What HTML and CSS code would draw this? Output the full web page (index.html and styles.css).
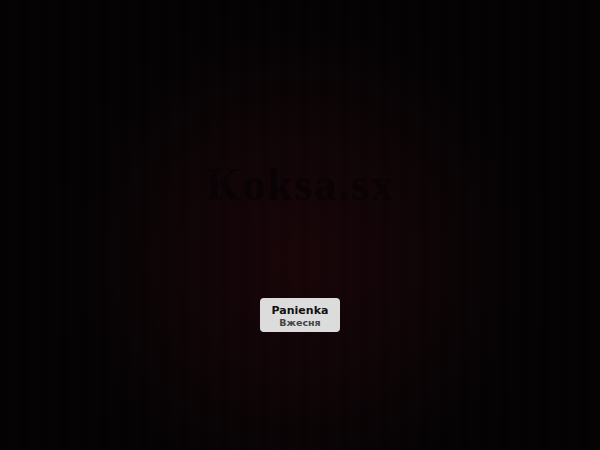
FILE: index.html
```html
<!DOCTYPE html>
<html lang="pl">
<head>
<meta charset="utf-8">
<title>Koksa.sx</title>
<link rel="stylesheet" href="styles.css">
</head>
<body>
<main class="stage">
  <h1 class="title">Koksa.sx</h1>
  <div class="tip">
    <span class="tip-name">Panienka</span>
    <span class="tip-sub">Вжесня</span>
  </div>
</main>
</body>
</html>
```

FILE: styles.css
```css
html, body {
  margin: 0;
  padding: 0;
  width: 600px;
  height: 450px;
  overflow: hidden;
  background: #040203;
}

.stage {
  width: 600px;
  height: 450px;
  display: flex;
  flex-direction: column;
  align-items: center;
  background:
    repeating-linear-gradient(90deg, rgba(0,0,0,0.03) 0 9px, rgba(255,255,255,0.003) 9px 20px),
    radial-gradient(ellipse 250px 260px at 300px 260px, #190508 0%, #0f0406 45%, #070304 78%, #040203 100%);
}

.title {
  margin: 160px 0 0;
  font-family: "Liberation Serif", "Times New Roman", serif;
  font-weight: bold;
  font-size: 46px;
  line-height: 50px;
  color: #0a0305;
  letter-spacing: 1.5px;
}

.tip {
  margin-top: 88px;
  width: 80px;
  height: 34px;
  box-sizing: border-box;
  padding-top: 7px;
  border-radius: 4px;
  background: #dcdcdc;
  display: flex;
  flex-direction: column;
  align-items: center;
  font-family: "DejaVu Sans", sans-serif;
  font-weight: bold;
}

.tip-name {
  font-size: 11px;
  line-height: 12px;
  color: #111111;
}

.tip-sub {
  font-size: 9.5px;
  line-height: 11px;
  color: #444444;
}
```
